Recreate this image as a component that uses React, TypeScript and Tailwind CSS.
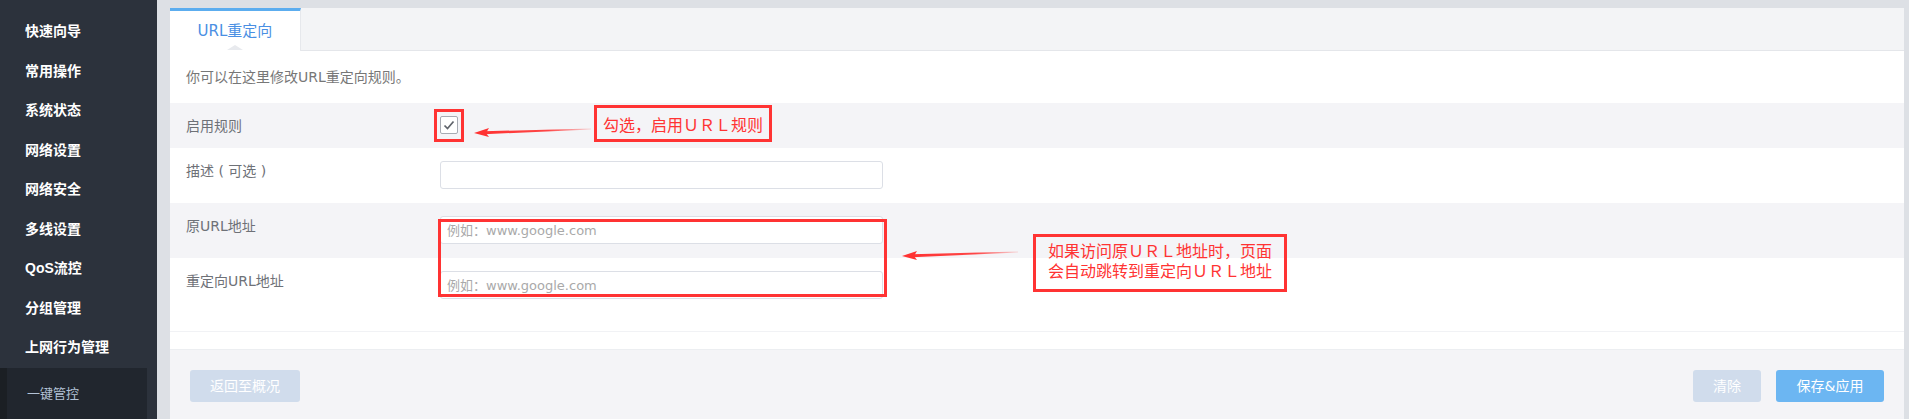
import React from "react";

const navItems = [
  "快速向导",
  "常用操作",
  "系统状态",
  "网络设置",
  "网络安全",
  "多线设置",
  "QoS流控",
  "分组管理",
  "上网行为管理",
];

function Arrow({ width }: { width: number }) {
  const id = `g${width}`;
  return (
    <svg width={width} height={14} viewBox={`0 0 ${width} 14`}>
      <defs>
        <linearGradient id={id} x1="0" y1="0" x2="1" y2="0">
          <stop offset="0" stopColor="#ff3333" stopOpacity="1" />
          <stop offset="0.6" stopColor="#ff3333" stopOpacity="0.9" />
          <stop offset="1" stopColor="#ff3333" stopOpacity="0.15" />
        </linearGradient>
      </defs>
      <polygon points={`11,7.3 ${width},4.4 ${width},5.6 11,10.2`} fill={`url(#${id})`} />
      <polygon points="1,9 16,4 13,9 16,13" fill="#ff3333" />
    </svg>
  );
}

function TextInput({ placeholder }: { placeholder?: string }) {
  return (
    <input
      type="text"
      placeholder={placeholder}
      className="w-[443px] h-[28px] border border-[#dcdfe6] rounded-[3px] bg-white px-[6px] text-[13px] text-[#555] placeholder:text-[#a9a9a9] outline-none font-['DejaVu_Sans','Noto_Sans_CJK_SC',sans-serif]"
    />
  );
}

function Row({
  label,
  height,
  grey,
  children,
  last,
}: {
  label: string;
  height: string;
  grey?: boolean;
  children: React.ReactNode;
  last?: boolean;
}) {
  return (
    <div
      className={`flex pt-[13px] ${height} ${grey ? "bg-[#f4f4f7]" : "bg-white"} ${
        last ? "border-b border-[#f1f2f5]" : ""
      }`}
    >
      <div className="w-[270px] pl-4 text-[14px] leading-5 text-[#6e7177]">{label}</div>
      <div>{children}</div>
    </div>
  );
}

export default function App() {
  return (
    <div className="flex w-[1909px] h-[419px] overflow-hidden bg-[#dde0e5] font-['DejaVu_Sans','Noto_Sans_CJK_SC',sans-serif]">
      {/* Sidebar */}
      <div className="w-[157px] shrink-0 bg-[#2c323c] flex flex-col pt-[12px] font-['Liberation_Sans','Noto_Sans_CJK_SC',sans-serif]">
        {navItems.map((n) => (
          <div key={n} className="h-10 flex items-center pl-[25px] text-[14px] font-bold text-white">
            {n}
          </div>
        ))}
        <div className="flex h-[52px]">
          <div className="w-[7px] bg-[#1b1f24]" />
          <div className="w-[140px] bg-[#21262e] flex items-center pl-[20px] text-[13px] text-[#b3c2d6]">
            一键管控
          </div>
        </div>
      </div>

      {/* Main */}
      <div className="flex-1 pl-[13px] pr-[5px] pt-[8px]">
        <div className="relative h-full bg-white flex flex-col">
          {/* Tab bar */}
          <div className="h-[43px] bg-[#f3f4f6] border-b border-[#e4e6ea] flex">
            <div className="relative w-[131px] h-[43px] bg-white border-t-[3px] border-[#5cadef] border-r border-r-[#e6e8ec] flex items-center justify-center text-[15px] text-[#4a8fe3] pt-[1px]">
              URL重定向
              <div className="absolute bottom-[1px] left-1/2 -translate-x-1/2 w-0 h-0 border-x-[8px] border-x-transparent border-b-[5px] border-b-[#e8eaee]" />
            </div>
          </div>

          {/* Description */}
          <div className="h-[52px] flex items-center pl-4 text-[14px] text-[#777]">
            你可以在这里修改URL重定向规则。
          </div>

          <Row label="启用规则" height="h-[45px]" grey>
            <div className="w-[18px] h-[18px] border border-[#a7abb3] rounded-[2px] bg-white flex items-center justify-center">
              <svg width="14" height="14" viewBox="0 0 14 14">
                <path d="M2.5 7.5 L5.5 10.5 L11.5 3.5" stroke="#60646b" strokeWidth="1.7" fill="none" />
              </svg>
            </div>
          </Row>
          <Row label="描述 ( 可选 )" height="h-[55px]">
            <TextInput />
          </Row>
          <Row label="原URL地址" height="h-[55px]" grey>
            <TextInput placeholder="例如：www.google.com" />
          </Row>
          <Row label="重定向URL地址" height="h-[74px]" last>
            <TextInput placeholder="例如：www.google.com" />
          </Row>
          <div className="h-[17px] bg-white" />

          {/* Footer */}
          <div className="flex-1 bg-[#f4f4f7] border-t border-[#eceef1] pt-[20px] px-5 flex justify-between items-start">
            <button className="w-[110px] h-[32px] rounded-[3px] bg-[#d0dcec] text-white text-[14px]">
              返回至概况
            </button>
            <div className="flex gap-[15px]">
              <button className="w-[68px] h-[32px] rounded-[3px] bg-[#d0dcec] text-white text-[14px]">
                清除
              </button>
              <button className="w-[108px] h-[32px] rounded-[3px] bg-[#6cb6f2] text-white text-[14px]">
                保存&amp;应用
              </button>
            </div>
          </div>

          {/* Annotations */}
          <div className="absolute left-[264px] top-[101px] w-[30px] h-[33px] border-[3px] border-[#ff3333]" />
          <div className="absolute left-[303px] top-[116px]">
            <Arrow width={118} />
          </div>
          <div className="absolute left-[424px] top-[97px] w-[178px] h-[37px] border-[3px] border-[#ff3333] flex items-center justify-center text-[16px] leading-5 text-[#ff3333] font-['Noto_Sans_CJK_SC',sans-serif]">
            勾选，启用ＵＲＬ规则
          </div>

          <div className="absolute left-[268px] top-[211px] w-[449px] h-[78px] border-[3px] border-[#ff3333]" />
          <div className="absolute left-[731px] top-[239px]">
            <Arrow width={117} />
          </div>
          <div className="absolute left-[863px] top-[226px] w-[254px] h-[58px] border-[3px] border-[#ff3333] pt-[3px] text-center text-[16px] leading-5 text-[#ff3333] font-['Noto_Sans_CJK_SC',sans-serif]">
            <div>如果访问原ＵＲＬ地址时，页面</div>
            <div>会自动跳转到重定向ＵＲＬ地址</div>
          </div>
        </div>
      </div>
    </div>
  );
}
